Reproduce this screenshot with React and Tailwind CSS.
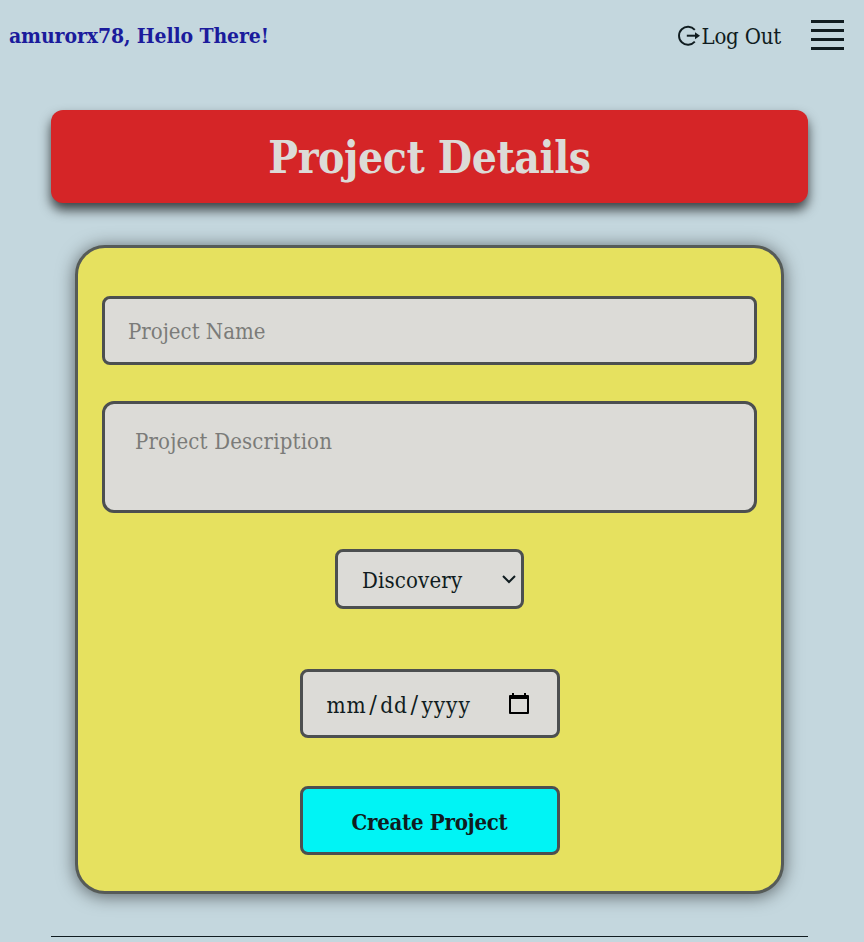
const field = "border-[3px] border-[#4c4f50] bg-[#dcdbd7]";

function LogoutIcon() {
  return (
    <svg width="24" height="24" viewBox="0 0 24 24" fill="none" stroke="#101c20" strokeWidth="1.9">
      <path d="M18.8 5.8A9 9 0 1 0 18.8 17.6" />
      <path d="M10.8 11.7H20" strokeWidth="2" />
      <path d="M19 8.2L24 11.7L19 15.2Z" fill="#101c20" stroke="none" />
    </svg>
  );
}

function Header() {
  return (
    <header className="flex h-[72px] items-center justify-between pl-[9px] pr-5">
      <span className="text-[21px] font-bold text-[#1b1b9c] whitespace-nowrap tracking-[-0.12px]">amurorx78, Hello There!</span>
      <div className="flex items-center">
        <a className="flex items-center">
          <LogoutIcon />
          <span className="ml-px text-[22px] whitespace-nowrap tracking-[-0.2px]">Log Out</span>
        </a>
        <button aria-label="Menu" className="ml-[30px] -mt-0.5 flex w-[33px] flex-col gap-[6px]">
          <span className="h-[3px] bg-[#101c20]" />
          <span className="h-[3px] bg-[#101c20]" />
          <span className="h-[3px] bg-[#101c20]" />
          <span className="h-[3px] bg-[#101c20]" />
        </button>
      </div>
    </header>
  );
}

export default function App() {
  return (
    <div className="h-[942px] overflow-hidden bg-[#c4d7de] font-['DejaVu_Serif_Condensed','DejaVu_Serif',serif] text-[22px] text-[#101c20]">
      <Header />
      <main className="ml-[51px] mt-[38px] flex w-[757px] flex-col">
        <h1 className="flex h-[93px] items-center justify-center rounded-xl bg-[#d52527] pt-[3px] text-[44px] font-bold tracking-[-0.4px] text-[#dcdbd7] shadow-[0_7px_12px_rgba(0,0,0,0.7)]">
          Project Details
        </h1>
        <form className="mx-6 mt-[42px] flex h-[649px] flex-col items-center rounded-[30px] border-[3px] border-[#565b58] bg-[#e6e15f] px-6 pt-12 shadow-[0_2px_18px_rgba(0,0,0,0.55)]">
          <input placeholder="Project Name" className={`${field} h-[69px] w-full rounded-lg px-[23px] pt-0.5 placeholder:text-[#7b7b79]`} />
          <textarea placeholder="Project Description" className={`${field} mt-9 block h-[112px] w-full resize-none rounded-xl px-[30px] pt-[21px] tracking-[0.16px] placeholder:text-[#7b7b79]`} />
          <div className={`${field} mt-9 flex h-[60px] w-[189px] items-center justify-between rounded-lg pl-6 pr-1`}>
            <span className="pt-0.5 tracking-[0.15px]">Discovery</span>
            <svg width="16" height="16" viewBox="0 0 16 16" fill="none" stroke="#101c20" strokeWidth="2">
              <path d="M2 5L8 11L14 5" />
            </svg>
          </div>
          <div className={`${field} mt-[60px] flex h-[69px] w-[260px] items-center justify-between rounded-lg pl-6 pr-[28px]`}>
            <span className="flex items-baseline pt-1 text-[22.5px] tracking-[0.9px]">
              <span>mm</span>
              <span className="mx-[2.5px] text-[25px] leading-none">/</span>
              <span>dd</span>
              <span className="mx-[2.5px] text-[25px] leading-none">/</span>
              <span>yyyy</span>
            </span>
            <svg width="20" height="22" viewBox="0 0 20 22" fill="none">
              <path d="M1 4H19V20H1Z" stroke="#000" strokeWidth="2" strokeLinejoin="round" />
              <path d="M0 3Q0 2 1 2H19Q20 2 20 3V6H0ZM3 0H5V4H3ZM15 0H17V4H15Z" fill="#000" />
            </svg>
          </div>
          <button type="button" className="mt-12 h-[69px] w-[260px] rounded-lg border-[3px] border-[#4c4f50] bg-[#00f4f5] pt-[3px] font-bold tracking-[-0.28px]">
            Create Project
          </button>
        </form>
        <hr className="mt-[42px] border-t border-[#101c20]" />
      </main>
    </div>
  );
}
